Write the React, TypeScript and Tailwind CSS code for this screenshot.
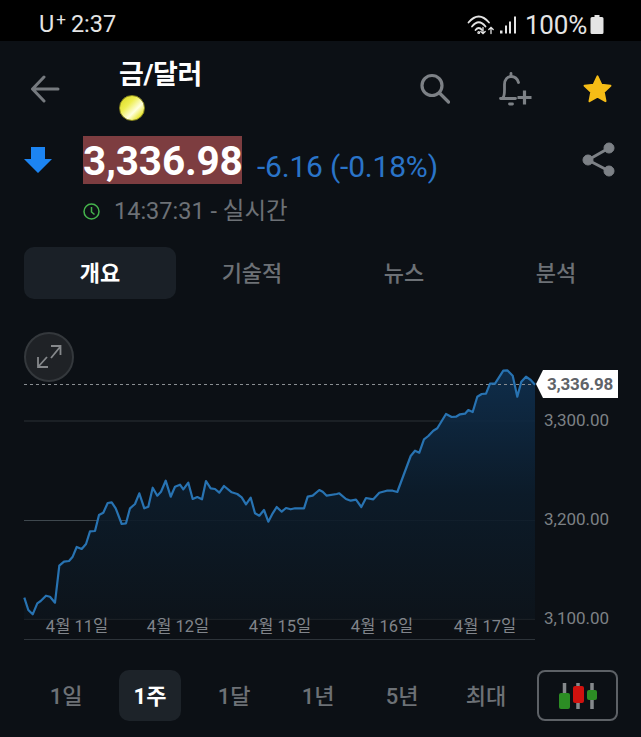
import React from "react";

const L: [number, number][] = [[73,833],[85,870],[98,883],[112,850],[122,843],[138,827],[150,830],[165,848],[178,737],[192,725],[207,723],[218,710],[230,681],[245,687],[258,672],[270,634],[285,633],[297,585],[310,578],[323,549],[335,547],[347,565],[365,612],[378,610],[390,565],[405,552],[418,520],[433,565],[445,560],[458,503],[472,527],[483,515],[497,482],[512,530],[525,500],[540,494],[550,508],[565,488],[578,537],[592,531],[606,538],[618,483],[632,505],[645,507],[658,518],[672,498],[695,517],[712,522],[725,532],[738,553],[752,533],[765,580],[778,587],[792,570],[805,605],[818,580],[830,561],[845,575],[858,564],[872,568],[885,565],[912,565],[923,530],[938,527],[958,510]];
const R: [number, number][] = [[8,425],[20,437],[50,432],[58,430],[78,447],[92,452],[108,449],[124,471],[138,444],[160,448],[178,428],[200,422],[218,422],[232,426],[272,318],[285,302],[298,308],[312,268],[325,258],[340,242],[352,235],[378,192],[395,201],[408,200],[420,193],[435,191],[445,180],[458,186],[472,140],[485,132],[498,131],[510,101],[525,101],[550,62],[562,61],[578,77],[592,140],[604,95],[618,80],[632,90],[645,104]];
const pts = [
  ...L.map(([x, y]) => [x / 3, y / 3]),
  ...R.map(([x, y]) => [320 + x / 3, 30 + y / 3]),
];
const line = pts.map((p) => p[0].toFixed(1) + "," + p[1].toFixed(1)).join(" ");
const area = `24,299 ${line} 535,299`;

const sans = "font-['Roboto','Noto_Sans_CJK_KR',sans-serif]";
const tabs = ["개요", "기술적", "뉴스", "분석"];
const ranges = ["1일", "1주", "1달", "1년", "5년", "최대"];
const dates = ["4월 11일", "4월 12일", "4월 15일", "4월 16일", "4월 17일"];
const dateX = ["left-[77px]", "left-[178px]", "left-[280px]", "left-[382px]", "left-[485px]"];

export default function App() {
  return (
    <div className={`${sans} w-[641px] h-[737px] bg-[#0c1015] flex flex-col overflow-hidden`}>
      {/* status bar */}
      <div className="h-[41px] bg-black flex items-center justify-between pt-[8px] pl-[39px] pr-[37px] text-[#e4e4e4] text-[23.5px] shrink-0">
        <div className="flex items-start leading-none">
          <span>U</span>
          <span className="text-[17px] leading-none -mt-[2px] ml-[2px]">+</span>
          <span className="ml-[5px]">2:37</span>
        </div>
        <div className="flex items-center leading-none">
          <svg width="28" height="24" viewBox="0 3.500 28 24" fill="none" stroke="#e4e4e4" strokeWidth="1.800" strokeLinecap="round">
            <path d="M1.500 13 Q11.750 1 22 13" />
            <path d="M5 17 Q11.750 8.500 18.500 17" />
            <path d="M8.500 20.500 Q11.750 16.500 15 20.500" />
            <path d="M16 18v6M13.800 22l2.200 2.200 2.200-2.200" strokeWidth="1.300" />
            <path d="M24 24v-6M21.800 20l2.200-2.200 2.200 2.200" strokeWidth="1.300" />
            <circle cx="11.750" cy="23" r="0.600" />
          </svg>
          <svg width="18" height="24" viewBox="0 3.500 18 24" className="ml-[4px]" fill="#e4e4e4">
            <rect x="1" y="21" width="2.500" height="3" />
            <rect x="6" y="16" width="2" height="8" />
            <rect x="10" y="12" width="2" height="12" />
            <rect x="15" y="7" width="2" height="17" />
          </svg>
          <span className="ml-[8px] text-[26px] tracking-[-0.2px]">100%</span>
          <svg width="14" height="19" viewBox="0 0 14 19" className="ml-[3px]" fill="#e4e4e4">
            <path d="M4.500 0h5v2h2.500a1.500 1.500 0 0 1 1.500 1.500v14a1.500 1.500 0 0 1-1.500 1.500h-10a1.500 1.500 0 0 1-1.500-1.500v-14a1.500 1.500 0 0 1 1.500-1.500h2.500z" />
          </svg>
        </div>
      </div>

      {/* header */}
      <div className="h-[95px] shrink-0 flex items-start relative">
        <div className="w-[119px] pl-[30px] pt-[34px] shrink-0">
          <svg width="30" height="28" viewBox="0 0 30 28" fill="none" stroke="#767a7f" strokeWidth="3" strokeLinecap="round" strokeLinejoin="round">
            <path d="M28 14H3M14 2 2.500 14 14 26" />
          </svg>
        </div>
        <div className="pt-[19px] flex flex-col items-start">
          <div className="text-[27px] font-bold text-white leading-[30px] tracking-[-0.4px]">금/달러</div>
          <div className="mt-[5px] w-[26px] h-[26px] rounded-full bg-[linear-gradient(135deg,#d9d81f_0%,#eeee50_35%,#ffffe0_62%,#e8e62f_85%,#c9c81a_100%)] border border-[#8d8a20]" />
        </div>
        <div className="ml-auto flex items-start pt-[30px] pr-[27px]">
          <svg width="32" height="32" viewBox="0 0 32 32" fill="none" stroke="#7d8186" strokeWidth="3.200" strokeLinecap="round" className="mt-[2px]">
            <circle cx="14" cy="12.500" r="10" />
            <path d="M21.500 20l9 9" />
          </svg>
          <svg width="36" height="36" viewBox="0 0 36 36" fill="none" stroke="#7d8186" strokeWidth="2.800" strokeLinecap="round" strokeLinejoin="round" className="ml-[48px]">
            <path d="M2.500 27.500h15M5 26.500c1.500-1.500 1.500-4 1.500-8v-5c0-5 3-8 6.500-8s6.500 2.500 7.500 6" />
            <path d="M13 2.500v3" />
            <path d="M11.500 33h3" />
            <path d="M19.500 26.500h14M26.500 19.500v14" strokeWidth="3.200" strokeLinecap="butt" />
          </svg>
          <svg width="33" height="32" viewBox="0 0 24 24" fill="#f6bd16" className="ml-[47px] mt-[2px]">
            <path stroke="#f6bd16" strokeWidth="1.500" strokeLinejoin="round" d="M12 2.500l2.900 6.300 6.800.8-5 4.700 1.300 6.800-6-3.400-6 3.400 1.300-6.800-5-4.700 6.800-.8z" />
          </svg>
        </div>
      </div>

      {/* price */}
      <div className="h-[48px] shrink-0 flex items-center relative">
        <div className="w-[83px] pl-[24px] shrink-0">
          <svg width="28" height="28" viewBox="0 0 28 28" fill="#1c84f2">
            <path d="M7 1h14v12h7L14 27 0 13h7z" />
          </svg>
        </div>
        <div className="w-[159px] h-[48px] bg-[#7d3d40] text-white font-bold text-[40.500px] leading-[50px] text-center whitespace-nowrap tracking-[-0.2px]">3,336.98</div>
        <div className="ml-[15px] text-[#2a74c8] text-[30px] mt-[13px] leading-none whitespace-nowrap tracking-[-0.2px]">-6.16 (-0.18%)</div>
        <div className="ml-auto pr-[26px]">
          <svg width="33" height="36" viewBox="0 0 33 36" fill="#7d8186" stroke="#7d8186">
            <circle cx="6" cy="18" r="5" />
            <circle cx="27" cy="6" r="5" />
            <circle cx="27" cy="29" r="5" />
            <path d="M6 18 27 6M6 18l21 11" strokeWidth="3" fill="none" />
          </svg>
        </div>
      </div>

      {/* time */}
      <div className="h-[27px] mt-[14px] shrink-0 flex items-center pl-[83px] text-[#6d7176] text-[23.500px] leading-none">
        <svg width="17" height="17" viewBox="0 0 17 17" fill="none" stroke="#45b34c" strokeWidth="1.500">
          <circle cx="8.500" cy="8.500" r="7.500" />
          <path d="M8.500 4v5l3 2.500" />
        </svg>
        <span className="ml-[14px] whitespace-nowrap">14:37:31 - 실시간</span>
      </div>

      {/* tabs */}
      <div className="mt-[22px] ml-[24px] h-[52px] shrink-0 flex text-[22px] font-medium">
        {tabs.map((t, i) => (
          <div
            key={t}
            className={
              i === 0
                ? "w-[152px] pt-[1px] flex items-center justify-center rounded-[10px] bg-[#1a2027] text-white font-bold"
                : "w-[152px] pt-[1px] flex items-center justify-center text-[#6d7176]"
            }
          >
            {t}
          </div>
        ))}
      </div>

      {/* chart */}
      <div className="relative h-[320px] mt-[21px] shrink-0">
        <svg width="641" height="320" viewBox="0 0 641 320" className="absolute left-0 top-0">
          <defs>
            <linearGradient id="fillg" x1="0" y1="50" x2="0" y2="299" gradientUnits="userSpaceOnUse">
              <stop offset="0" stopColor="#0f3050" stopOpacity="0.9" />
              <stop offset="0.5" stopColor="#0c1c2b" stopOpacity="0.9" />
              <stop offset="1" stopColor="#0d141b" stopOpacity="0.9" />
            </linearGradient>
          </defs>
          <line x1="24" x2="535" y1="101" y2="101" stroke="#2a3036" />
          <line x1="24" x2="535" y1="200.500" y2="200.500" stroke="#3f484e" />
          <line x1="24" x2="535" y1="299" y2="299" stroke="#2a3036" />
          <line x1="24" x2="535" y1="319.500" y2="319.500" stroke="#2e343a" />
          <polygon points={area} fill="url(#fillg)" />
          <line x1="24" x2="535" y1="64.500" y2="64.500" stroke="#8a8e92" strokeDasharray="3 3" />
          <polyline points={line} fill="none" stroke="#2873b2" strokeWidth="2.200" strokeLinejoin="round" />
        </svg>

        <div className="absolute left-[24px] top-[12px] w-[50px] h-[50px] rounded-full bg-[#1f2226] border-2 border-[#34383c] flex items-center justify-center">
          <svg width="26" height="26" viewBox="0 0 26 26" fill="none" stroke="#85888b" strokeWidth="1.800">
            <path d="M15 14 24 3M15 2h9.500v9M11 13 2 23M2 13v10h10" />
          </svg>
        </div>

        <div className="absolute left-[536px] top-[50px] w-[82px] h-[28px] bg-white text-[#5f6368] text-[17px] font-bold leading-[28px] pl-[11px] [clip-path:polygon(7px_0,100%_0,100%_100%,7px_100%,0_50%)] tracking-[-0.2px] whitespace-nowrap">
          3,336.98
        </div>
        <div className="absolute left-[544px] top-[89px] text-[#7d8185] text-[17px] leading-[22px]">3,300.00</div>
        <div className="absolute left-[544px] top-[188px] text-[#7d8185] text-[17px] leading-[22px]">3,200.00</div>
        <div className="absolute left-[544px] top-[287px] text-[#7d8185] text-[17px] leading-[22px]">3,100.00</div>
        {dates.map((d, i) => (
          <div key={d} className={`absolute ${dateX[i]} top-[297px] -translate-x-1/2 text-[#80848a] text-[16.500px] leading-[20px] whitespace-nowrap`}>
            {d}
          </div>
        ))}
      </div>

      {/* range */}
      <div className="mt-[30px] ml-[24px] h-[51px] flex items-center text-[22px] font-medium shrink-0">
        {ranges.map((r, i) => (
          <div key={r} className="w-[84px] flex justify-center">
            <div
              className={
                i === 1
                  ? "w-[62px] h-[51px] pt-[1px] rounded-[10px] bg-[#1d2329] text-white font-bold flex items-center justify-center"
                  : "w-[62px] h-[51px] pt-[1px] text-[#6d7176] flex items-center justify-center"
              }
            >
              {r}
            </div>
          </div>
        ))}
        <div className="ml-[9px] w-[81px] h-[51px] rounded-[8px] border-2 border-[#5d6166] flex items-center justify-center">
          <svg width="38" height="28" viewBox="0 0 38 28">
            <path d="M5.500 1v26M19 1v26M33 1v26" stroke="#85898c" strokeWidth="3.500" />
            <rect x="0" y="11" width="11" height="16" rx="2" fill="#2c8d24" />
            <rect x="14" y="4" width="11" height="17" rx="2" fill="#d0110e" />
            <rect x="28" y="8" width="10" height="10" rx="2" fill="#2c8d24" />
          </svg>
        </div>
      </div>
    </div>
  );
}
